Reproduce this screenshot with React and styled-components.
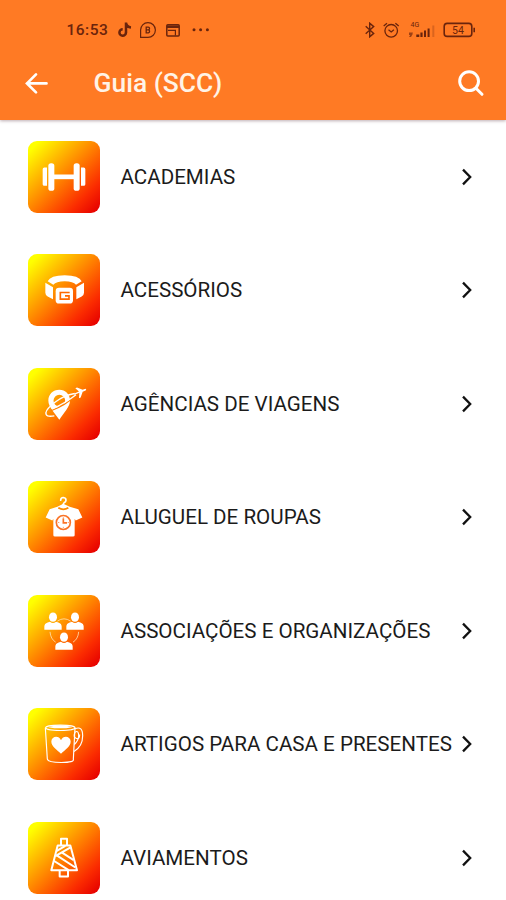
import React from 'react';
import styled, {createGlobalStyle} from 'styled-components';

const colors = {
  primary: '#ff7a24',
  status: '#6a240c',
  title: '#fff3e6',
  text: '#1b1b1b',
  white: '#fff',
};

const GlobalStyle = createGlobalStyle`
  * {
    box-sizing: border-box;
  }

  body {
    margin: 0;
    background: ${colors.white};
    font-family: Roboto, 'Liberation Sans', sans-serif;
    overflow: hidden;
  }

  svg {
    display: block;
    flex: none;
  }
`;

const Screen = styled.div`
  display: flex;
  flex-direction: column;
  width: 506px;
  height: 900px;
  overflow: hidden;
  background: ${colors.white};
`;

const Header = styled.header`
  flex: none;
  height: 120px;
  background: ${colors.primary};
  box-shadow: 0 1px 3px rgba(90, 50, 60, 0.4);
`;

const StatusBar = styled.div`
  display: flex;
  justify-content: space-between;
  height: 48px;
  padding: 12px 30px 0 66.5px;
  color: ${colors.status};
`;

const StatusGroup = styled.div`
  display: flex;
  align-items: center;
  height: 36px;
  gap: ${p => p.gap}px;
`;

const Clock = styled.span`
  width: 42.5px;
  font-size: 15.5px;
  font-weight: 500;
  letter-spacing: 0.5px;
  white-space: nowrap;
`;

const TitleBar = styled.div`
  display: flex;
  align-items: center;
  height: 70px;
  padding: 0 20px 0 24px;
  color: ${colors.title};
`;

const Title = styled.h1`
  flex: 1;
  margin: 0 0 0 43.5px;
  font-size: 26.4px;
  font-weight: 500;
  line-height: 32px;
`;

const IconButton = styled.button`
  padding: 0;
  border: 0;
  background: none;
  color: ${colors.white};
`;

const List = styled.ul`
  margin: 0;
  padding: 0;
  list-style: none;
`;

const Item = styled.li`
  display: flex;
  align-items: center;
  height: 113.5px;
  padding: 0 32.7px 0 27.7px;
`;

const Tile = styled.div`
  flex: none;
  width: 72px;
  height: 72px;
  border-radius: 9px;
  overflow: hidden;
  background: linear-gradient(135deg, #ffff00 8%, #ffc800 26%, #ff7a00 52%, #fb2c00 78%, #e60000 97%);
`;

const Label = styled.span`
  flex: 1;
  margin-left: 20.8px;
  color: ${colors.text};
  font-size: 20.6px;
  line-height: 26px;
  white-space: nowrap;
`;

const TileIcon = ({children}) => (
  <Tile>
    <svg width="72" height="72" viewBox="23 25.5 216 216" fill="#fff" stroke="none">
      {children}
    </svg>
  </Tile>
);

const Dumbbell = () => (
  <TileIcon>
    <rect x="84" y="92" width="18" height="83" rx="8"/>
    <rect x="160" y="92" width="18" height="83" rx="8"/>
    <path d="M80 105h-8q-5 0-5 5v45q0 5 5 5h8zM182 105h8q5 0 5 5v45q0 5-5 5h-8z"/>
    <rect x="98" y="126" width="66" height="14"/>
  </TileIcon>
);

const Belt = () => (
  <TileIcon>
    <path d="M82 107q8-18 51-18t51 18l-17 11q-8-11-34-11t-34 11z"/>
    <path d="M75 112l23 13v36l-16-8q-7-4-7-11zM191 112l-23 13v36l16-8q7-4 7-11z"/>
    <rect x="106" y="127" width="52" height="47" rx="10"/>
    <path d="M148 141h-28v20h26v-10h-12" fill="none" stroke="#ff6a00" strokeWidth="5"/>
  </TileIcon>
);

const Travel = () => (
  <TileIcon>
    <path
      fillRule="evenodd"
      d="M117 91c-19 0-33 14-33 32 0 20 19 36 33 58 13-22 32-38 32-58 0-18-14-32-32-32zm0 15a17 17 0 1 1 0 35 17 17 0 0 1 0-35z"
    />
    <path d="M92 153q45-15 70-44" fill="none" stroke="#ff8000" strokeWidth="4"/>
    <path
      d="M163 102Q130 108 104 128T77 159q-3 15 25 10M95 149q40-18 72-43"
      fill="none"
      stroke="#fff"
      strokeWidth="4"
    />
    <path d="M160 103l16-7-11-10 5-2 17 7 8-3q5 1 1 5l-9 4-6 17-5 2 1-16-14 6z"/>
  </TileIcon>
);

const Shirt = () => (
  <TileIcon>
    <path
      d="M121 83q0-8 8-8 8 1 8 8 0 5-6 8-3 2-3 9"
      fill="none"
      stroke="#fff"
      strokeWidth="5"
      strokeLinecap="round"
    />
    <path d="M111 103l18-9 19 9 26 7 12 25-20 9-3-5v49q0 4-5 4h-54q-5 0-5-4v-49l-3 5-20-9 12-25z"/>
    <path d="M114 106q15 9 30 0" fill="none" stroke="#ff8c00" strokeWidth="5"/>
    <circle cx="129" cy="150" r="21" fill="none" stroke="#fa7428" strokeWidth="5"/>
    <path d="M129 138v13h11" fill="none" stroke="#fa7428" strokeWidth="5"/>
    <path d="M129 134v5M113 150h4M129 163v4M142 150h4" fill="none" stroke="#fa7428" strokeWidth="2"/>
  </TileIcon>
);

const Person = ({x, y}) => (
  <g transform={`translate(${x} ${y})`}>
    <ellipse cx="0" cy="12" rx="12" ry="14"/>
    <path d="M-26 50v-10q0-9 10-12l7-2q9 7 18 0l7 2q10 3 10 12v10z"/>
  </g>
);

const People = () => (
  <TileIcon>
    <path
      d="M111 104q20-14 40 0M89 136q2 22 17 31M175 136q-2 22-17 31"
      fill="none"
      stroke="#ffe0b0"
      strokeWidth="2.5"
    />
    <Person x={98} y={80}/>
    <Person x={164} y={80}/>
    <Person x={131} y={140}/>
  </TileIcon>
);

const Mug = () => (
  <TileIcon>
    <g fill="none" stroke="#fff" strokeWidth="3.5">
      <path d="M75 85l6 94q2 10 42 10t36-10l5-94"/>
      <ellipse cx="120" cy="85" rx="44" ry="8"/>
      <path d="M164 88q23-10 23 21 0 32-26 47M163 99q12-9 12 10 0 14-13 26"/>
      <path d="M164 99q-7 12 4 18 10 2 10-12"/>
    </g>
    <path d="M84 83q36-11 72 0-36 7-72 0z"/>
    <path d="M122 163c-9-11-30-22-29-38 1-16 23-19 29-3 6-16 28-13 29 3 1 16-20 27-29 38z"/>
  </TileIcon>
);

const Thread = () => (
  <TileIcon>
    <g fill="none" stroke="#fff" strokeWidth="6" strokeLinejoin="round">
      <path d="M122 95V76h18v19M112 96h38l20 74H93z"/>
      <path d="M118 171v18h25v-18"/>
      <path d="M108 113l27-16M105 128l47-27M107 124l58 38M123 116l37 24M99 141l46 29"/>
    </g>
  </TileIcon>
);

const BackIcon = () => (
  <svg width="26" height="26" viewBox="0 0 26 26" fill="none" stroke="currentColor" strokeWidth="2.7" strokeLinecap="round">
    <path d="M22.5 13.4H3M12 4.4l-9 9 9 9"/>
  </svg>
);

const SearchIcon = () => (
  <svg width="30" height="30" viewBox="0 0 30 30" fill="none" stroke="currentColor" strokeWidth="3" strokeLinecap="round">
    <circle cx="13.1" cy="13.2" r="9.4"/>
    <path d="M20 20.3l6 6"/>
  </svg>
);

const Chevron = () => (
  <svg width="12" height="18" viewBox="0 0 12 18" fill="none" stroke="#111" strokeWidth="2.3">
    <path d="M2 1.6L9.2 9 2 16.4"/>
  </svg>
);

const TikTokIcon = () => (
  <svg width="14" height="16" viewBox="0 0 14 16" fill="none" stroke="currentColor" strokeWidth="2.5">
    <path d="M8 .5v10.2a3.3 3.3 0 1 1-3.3-3.5M8 1q.6 4 5 4.4"/>
  </svg>
);

const ChatIcon = () => (
  <svg width="17" height="17" viewBox="0 0 17 17" fill="none" stroke="currentColor" strokeWidth="1.2">
    <path d="M.6 15.4V8.1a7.4 7.4 0 1 1 7.4 7.3z"/>
    <path d="M6.2 5.1v5.8h2.2a1.6 1.6 0 0 0 0-3.1H6.2h2a1.3 1.3 0 0 0 0-2.7z" strokeWidth="1.3"/>
  </svg>
);

const WindowIcon = () => (
  <svg width="15" height="13" viewBox="0 0 15 13" fill="none" stroke="currentColor" strokeWidth="1.5">
    <rect x=".8" y=".8" width="12.4" height="11.2" rx="1"/>
    <path d="M1 2.7h12" strokeWidth="2.6"/>
    <path d="M2 6.3h7.4v5.2" strokeWidth="1.2"/>
  </svg>
);

const MoreIcon = () => (
  <svg width="22" height="4" viewBox="0 0 22 4" fill="currentColor">
    <circle cx="5" cy="1.8" r="1.5"/>
    <circle cx="11.6" cy="1.8" r="1.5"/>
    <circle cx="18.4" cy="1.8" r="1.5"/>
  </svg>
);

const BluetoothIcon = () => (
  <svg width="11" height="16" viewBox="0 0 11 16" fill="none" stroke="currentColor" strokeWidth="1.4">
    <path d="M1.7 4.2l8 7.2-4 3.4V1.2l4 3.4-8 7.2"/>
  </svg>
);

const AlarmIcon = () => (
  <svg width="17" height="17" viewBox="0 0 17 17" fill="none" stroke="currentColor" strokeWidth="1.3">
    <circle cx="8.2" cy="8.8" r="6.3"/>
    <path d="M.7 4l3.3-2.8M15.7 4l-3.3-2.8M5.5 7.8L8.2 10l2.7-2.2"/>
  </svg>
);

const SignalIcon = () => (
  <svg width="27" height="18" viewBox="0 0 27 18" fill="currentColor">
    <text x="2.5" y="6.4" fontSize="7">4G</text>
    <path d="M1 11.5h4l-2 2.5h-2zM3 12.5h2l-2 3.5H1z" opacity=".65"/>
    <path d="M8.3 13.5h3V16h-3zM12.4 11.5h2.2V16h-2.2zM16 9.5h2V16h-2zM19.6 7.5h2V16h-2z"/>
    <path d="M24.3 4.5h2V16h-2z" opacity=".25"/>
  </svg>
);

const BatteryIcon = () => (
  <svg width="33" height="16" viewBox="0 0 33 16" fill="none" stroke="currentColor">
    <rect x="1.2" y="1.4" width="27.6" height="13" rx="3" strokeWidth="1.6"/>
    <path d="M31.2 5.8v4.4" strokeWidth="1.6"/>
    <text x="15" y="11.8" textAnchor="middle" fontSize="10.5" fill="currentColor" stroke="none">54</text>
  </svg>
);

const categories = [
  {label: 'ACADEMIAS', Icon: Dumbbell},
  {label: 'ACESSÓRIOS', Icon: Belt},
  {label: 'AGÊNCIAS DE VIAGENS', Icon: Travel},
  {label: 'ALUGUEL DE ROUPAS', Icon: Shirt},
  {label: 'ASSOCIAÇÕES E ORGANIZAÇÕES', Icon: People},
  {label: 'ARTIGOS PARA CASA E PRESENTES', Icon: Mug},
  {label: 'AVIAMENTOS', Icon: Thread},
];

export default () => (
  <Screen>
    <GlobalStyle/>
    <Header>
      <StatusBar>
        <StatusGroup gap={8.5}>
          <Clock>16:53</Clock>
          <TikTokIcon/>
          <ChatIcon/>
          <WindowIcon/>
          <MoreIcon/>
        </StatusGroup>
        <StatusGroup gap={8}>
          <BluetoothIcon/>
          <AlarmIcon/>
          <SignalIcon/>
          <BatteryIcon/>
        </StatusGroup>
      </StatusBar>
      <TitleBar>
        <IconButton aria-label="Voltar"><BackIcon/></IconButton>
        <Title>Guia (SCC)</Title>
        <IconButton aria-label="Buscar"><SearchIcon/></IconButton>
      </TitleBar>
    </Header>
    <List>
      {categories.map(({label, Icon}) => (
        <Item key={label}>
          <Icon/>
          <Label>{label}</Label>
          <Chevron/>
        </Item>
      ))}
    </List>
  </Screen>
);
